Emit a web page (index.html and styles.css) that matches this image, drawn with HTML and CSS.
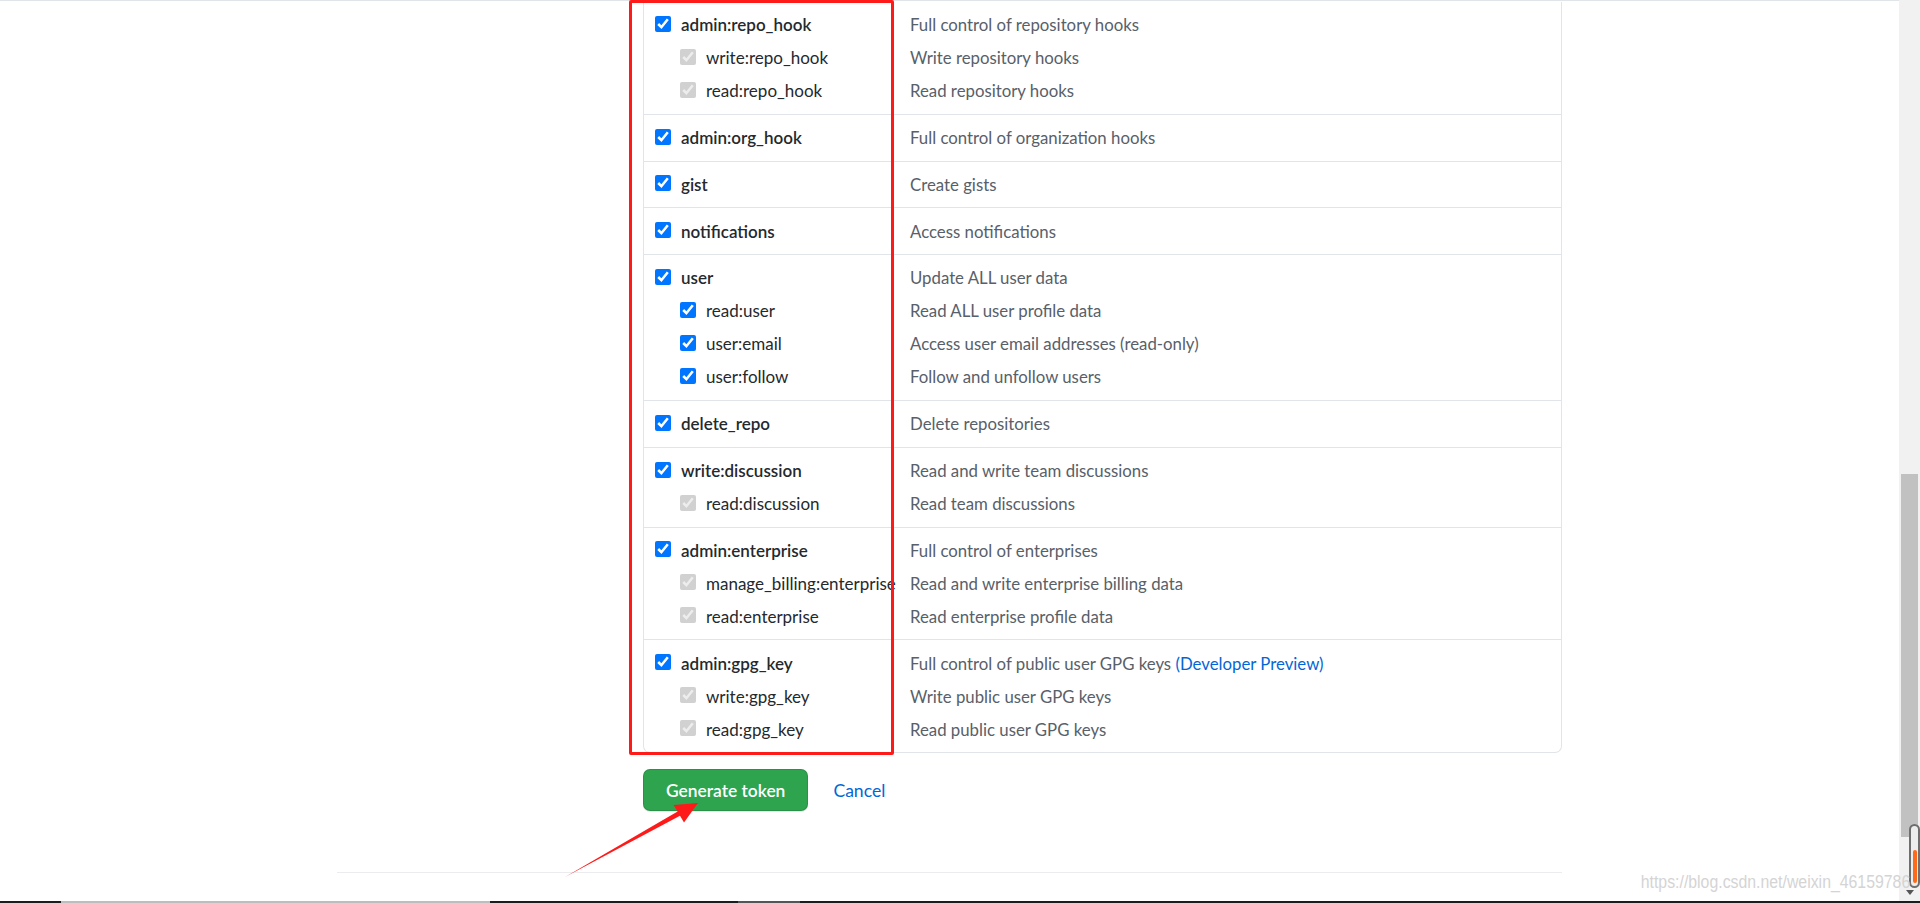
FILE: index.html
```html
<!DOCTYPE html>
<html lang="en">
<head>
    <meta charset="UTF-8">
    <meta name="viewport" content="width=device-width, initial-scale=1.0">
    <title>New personal access token</title>
    <link rel="stylesheet" href="styles.css">
</head>
<body>
    <div class="window">
        <div class="page">
            <div class="container">
                <div class="layout">
                    <div class="sidebar"></div>
                    <div class="main">
                        <div class="scopes">
                            <div class="scope-group">
                                <div class="scope-names">
                                    <label class="scope"><input type="checkbox" checked>admin:repo_hook</label>
                                    <label class="scope sub"><input type="checkbox" checked disabled>write:repo_hook</label>
                                    <label class="scope sub"><input type="checkbox" checked disabled>read:repo_hook</label>
                                </div>
                                <div class="scope-descs">
                                    <div class="desc">Full control of repository hooks</div>
                                    <div class="desc">Write repository hooks</div>
                                    <div class="desc">Read repository hooks</div>
                                </div>
                            </div>

                            <div class="scope-group">
                                <div class="scope-names">
                                    <label class="scope"><input type="checkbox" checked>admin:org_hook</label>
                                </div>
                                <div class="scope-descs">
                                    <div class="desc">Full control of organization hooks</div>
                                </div>
                            </div>

                            <div class="scope-group">
                                <div class="scope-names">
                                    <label class="scope"><input type="checkbox" checked>gist</label>
                                </div>
                                <div class="scope-descs">
                                    <div class="desc">Create gists</div>
                                </div>
                            </div>

                            <div class="scope-group">
                                <div class="scope-names">
                                    <label class="scope"><input type="checkbox" checked>notifications</label>
                                </div>
                                <div class="scope-descs">
                                    <div class="desc">Access notifications</div>
                                </div>
                            </div>

                            <div class="scope-group">
                                <div class="scope-names">
                                    <label class="scope"><input type="checkbox" checked>user</label>
                                    <label class="scope sub"><input type="checkbox" checked>read:user</label>
                                    <label class="scope sub"><input type="checkbox" checked>user:email</label>
                                    <label class="scope sub"><input type="checkbox" checked>user:follow</label>
                                </div>
                                <div class="scope-descs">
                                    <div class="desc">Update ALL user data</div>
                                    <div class="desc">Read ALL user profile data</div>
                                    <div class="desc">Access user email addresses (read-only)</div>
                                    <div class="desc">Follow and unfollow users</div>
                                </div>
                            </div>

                            <div class="scope-group">
                                <div class="scope-names">
                                    <label class="scope"><input type="checkbox" checked>delete_repo</label>
                                </div>
                                <div class="scope-descs">
                                    <div class="desc">Delete repositories</div>
                                </div>
                            </div>

                            <div class="scope-group">
                                <div class="scope-names">
                                    <label class="scope"><input type="checkbox" checked>write:discussion</label>
                                    <label class="scope sub"><input type="checkbox" checked disabled>read:discussion</label>
                                </div>
                                <div class="scope-descs">
                                    <div class="desc">Read and write team discussions</div>
                                    <div class="desc">Read team discussions</div>
                                </div>
                            </div>

                            <div class="scope-group">
                                <div class="scope-names">
                                    <label class="scope"><input type="checkbox" checked>admin:enterprise</label>
                                    <label class="scope sub"><input type="checkbox" checked disabled>manage_billing:enterprise</label>
                                    <label class="scope sub"><input type="checkbox" checked disabled>read:enterprise</label>
                                </div>
                                <div class="scope-descs">
                                    <div class="desc">Full control of enterprises</div>
                                    <div class="desc">Read and write enterprise billing data</div>
                                    <div class="desc">Read enterprise profile data</div>
                                </div>
                            </div>

                            <div class="scope-group">
                                <div class="scope-names">
                                    <label class="scope"><input type="checkbox" checked>admin:gpg_key</label>
                                    <label class="scope sub"><input type="checkbox" checked disabled>write:gpg_key</label>
                                    <label class="scope sub"><input type="checkbox" checked disabled>read:gpg_key</label>
                                </div>
                                <div class="scope-descs">
                                    <div class="desc">Full control of public user GPG keys&nbsp;<a href="#">(Developer Preview)</a></div>
                                    <div class="desc">Write public user GPG keys</div>
                                    <div class="desc">Read public user GPG keys</div>
                                </div>
                            </div>
                        </div>

                        <div class="form-actions">
                            <button type="submit" class="btn-primary">Generate token</button>
                            <a href="#" class="cancel">Cancel</a>
                        </div>
                    </div>
                </div>
                <div class="footer"></div>
            </div>
        </div>

        <div class="scrollbar">
            <div class="scrollbar-thumb"></div>
        </div>
    </div>

    <div class="taskbar">
        <span class="task-gap"></span>
        <span class="task-light"></span>
        <span class="task-gap-wide"></span>
        <span class="task-mid"></span>
    </div>

    <!-- red annotation drawn over the screenshot -->
    <div class="mark-box"></div>
    <svg class="mark-arrow" width="1920" height="903" viewBox="0 0 1920 903">
        <polygon points="565,877 677.6,811.4 673.5,805 698,803 684,822.5 680,815.8" fill="#ff1a1a"/>
    </svg>

    <div class="csdn-progress"><span class="csdn-progress-fill"></span></div>
    <div class="csdn-arrow"></div>
    <div class="watermark">https://blog.csdn.net/weixin_46159786</div>
</body>
</html>
```

FILE: styles.css
```css
:root {
    --border-color: #e1e4e8;
    --text-color: #24292e;
    --muted-color: #586069;
    --link-color: #0366d6;
    --green: #2ea44f;
    --mark-red: #ff1a1a;
}

* {
    box-sizing: border-box;
    margin: 0;
    padding: 0;
}

body {
    height: 903px;
    display: flex;
    flex-direction: column;
    overflow: hidden;
    font-family: Lato, "Open Sans", sans-serif;
    font-size: 17px;
    color: var(--text-color);
    background-color: #fff;
}

.window {
    flex: 1;
    display: flex;
    min-height: 0;
}

.page {
    flex: 1;
    border-top: 1px solid var(--border-color);
}

.container {
    width: 1225px;
    margin: 0 auto;
}

.layout {
    display: flex;
}

.sidebar {
    width: 306px;
    flex-shrink: 0;
}

.main {
    flex: 1;
}

/* scopes table */
.scopes {
    margin-top: 1px;
    border: 1px solid var(--border-color);
    border-top: none;
    border-radius: 0 0 7px 7px;
}

.scope-group {
    display: flex;
    border-top: 1px solid var(--border-color);
}

.scope-group:first-child {
    border-top: none;
}

.scope-names {
    width: 249px;
    flex-shrink: 0;
    border-right: 1px solid var(--border-color);
    padding: 6.3px 0 6.5px 11px;
}

.scope-descs {
    flex: 1;
    padding: 6.3px 0 6.5px 17px;
    font-size: 16.8px;
    color: var(--muted-color);
}

.scope,
.desc {
    height: 33px;
    display: flex;
    align-items: center;
    white-space: nowrap;
}

.scope {
    gap: 10px;
    font-weight: 600;
}

.scope.sub {
    padding-left: 25px;
    font-weight: 400;
}

.scope input {
    width: 16px;
    height: 16px;
    margin: 0 0 2px 0;
    flex-shrink: 0;
    accent-color: #0075ff;
}

.desc a {
    color: var(--link-color);
    text-decoration: none;
}

/* buttons */
.form-actions {
    display: flex;
    align-items: center;
    gap: 25px;
    margin-top: 16px;
}

.btn-primary {
    height: 42px;
    padding: 0 22px;
    font-family: inherit;
    font-size: 17.4px;
    font-weight: 600;
    color: #fff;
    background-color: var(--green);
    border: 1px solid rgba(27, 31, 35, 0.15);
    border-radius: 7px;
    box-shadow: 0 1px 0 rgba(27, 31, 35, 0.1);
}

.cancel {
    font-size: 17.6px;
    color: var(--link-color);
    text-decoration: none;
}

.footer {
    margin-top: 61px;
    border-top: 1px solid #eaecef;
}

/* browser scrollbar */
.scrollbar {
    width: 21px;
    background-color: #f1f1f1;
    padding: 474px 2px 0;
}

.scrollbar-thumb {
    height: 363px;
    background-color: #c1c1c1;
}

.taskbar {
    height: 2px;
    display: flex;
    background-color: #1c1c1c;
}

.task-gap {
    width: 61px;
}

.task-light {
    width: 429px;
    background-color: #bdbdbd;
}

.task-gap-wide {
    width: 248px;
}

.task-mid {
    width: 62px;
    background-color: #555;
}

/* annotation overlay */
.mark-box {
    position: absolute;
    left: 629px;
    top: 0;
    width: 265px;
    height: 755px;
    border: 3px solid var(--mark-red);
    border-radius: 2px;
}

.mark-arrow {
    position: absolute;
    left: 0;
    top: 0;
    pointer-events: none;
}

.csdn-progress {
    position: absolute;
    left: 1909px;
    top: 824px;
    width: 11px;
    height: 64px;
    border: 2px solid #6e6e6e;
    border-radius: 6px;
    background-color: #ededed;
    display: flex;
    align-items: flex-end;
    justify-content: center;
    padding-bottom: 3px;
}

.csdn-progress-fill {
    width: 4px;
    height: 33px;
    background-color: #ff6a1a;
    border-radius: 2px;
}

.csdn-arrow {
    position: absolute;
    left: 1906px;
    top: 890px;
    border-left: 4px solid transparent;
    border-right: 4px solid transparent;
    border-top: 5px solid #555;
}

.watermark {
    position: absolute;
    right: 10px;
    top: 872px;
    font-family: "Liberation Sans", Arial, sans-serif;
    font-size: 18px;
    color: #d4d4d4;
    transform: scaleX(0.88);
    transform-origin: right center;
    white-space: nowrap;
}
```
